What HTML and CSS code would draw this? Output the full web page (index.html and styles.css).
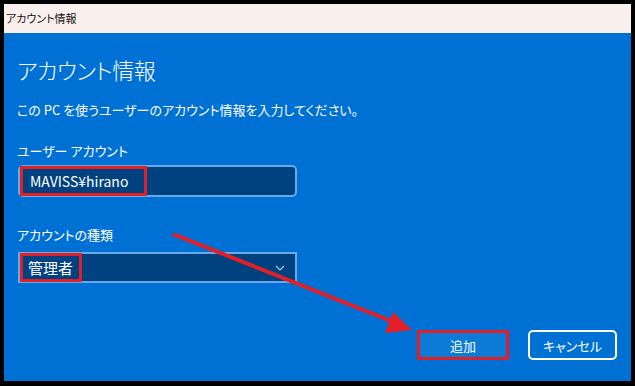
FILE: index.html
```html
<!DOCTYPE html>
<html lang="ja">
<head>
    <meta charset="UTF-8">
    <meta name="viewport" content="width=device-width, initial-scale=1.0">
    <title>アカウント情報</title>
    <link rel="stylesheet" href="styles.css">
</head>
<body>
    <div class="window">
        <div class="titlebar">アカウント情報</div>

        <div class="content">
            <h1 class="heading">アカウント情報</h1>
            <p class="lead">この PC を使うユーザーのアカウント情報を入力してください。</p>

            <div class="field-label first">ユーザー アカウント</div>
            <div class="text-box">
                <span class="mark">MAVISS¥hirano</span>
            </div>

            <div class="field-label second">アカウントの種類</div>
            <div class="select-box">
                <span class="mark">管理者</span>
                <svg class="chevron" width="10" height="6" viewBox="0 0 10 6">
                    <path d="M1 1 L5 5 L9 1" fill="none" stroke="#a9c8e8" stroke-width="1.2"/>
                </svg>
            </div>

            <div class="actions">
                <button class="btn btn-primary">追加</button>
                <button class="btn btn-secondary">キャンセル</button>
            </div>
        </div>

        <!-- annotation arrow -->
        <svg class="arrow" width="635" height="386" viewBox="0 0 635 386">
            <line x1="173" y1="234" x2="396" y2="323" stroke="#e21f26" stroke-width="4"/>
            <polygon points="393,312 385,333 412,330" fill="#e21f26"/>
        </svg>
    </div>
</body>
</html>
```

FILE: styles.css
```css
body { margin: 0; padding: 0; background: #000; font-family: "Noto Sans CJK JP", "Noto Sans", sans-serif; font-feature-settings: "palt"; }
.window { position: relative; margin: 4px 4px 5px 4px; height: 377px; background: #0071d4; color: #fff; }
.titlebar { height: 29px; line-height: 29px; padding-left: 2px; background: #f9efec; color: #111; font-size: 11px; }
.content { padding: 25px 14px 0 14px; display: flex; flex-direction: column; }
.heading { margin: 0 0 0 -1px; font-size: 22px; line-height: 22px; font-weight: 300; letter-spacing: -0.4px; }
.lead { margin: 23px 0 0 -1px; font-size: 13px; line-height: 13px; }
.field-label { font-size: 13px; line-height: 14px; margin-left: -1px; }
.field-label.first { margin-top: 28px; }
.field-label.second { margin-top: 31px; }
.text-box { margin-top: 7px; width: 275px; height: 28px; border: 2px solid #6aa9e6; border-radius: 5px; background: #00427f; display: flex; align-items: stretch; padding-left: 0; }
.select-box { margin-top: 10px; width: 275px; height: 27px; border: 2px solid #6aa9e6; background: #00427f; display: flex; align-items: stretch; justify-content: space-between; }
.mark { display: flex; align-items: center; border: 3px solid #e21f26; padding: 0 8px 0 7px; font-size: 14px; margin-top: -1px; margin-bottom: -1px; }
.text-box .mark { width: 106px; }
.select-box .mark { font-size: 15px; padding: 0 6px 0 5px; }
.chevron { align-self: center; margin-right: 10px; }
.actions { margin-top: 47px; display: flex; justify-content: flex-end; gap: 19px; }
.btn { height: 30px; font-family: inherit; font-size: 13px; color: #fff; padding: 0; cursor: pointer; font-feature-settings: "palt"; }
.btn-primary { width: 92px; background: #0c7bd8; border: 3px solid #e21f26; }
.btn-secondary { width: 89px; background: transparent; border: 2px solid #fff; border-radius: 5px; }
.arrow { position: absolute; left: -4px; top: -4px; pointer-events: none; }
```
